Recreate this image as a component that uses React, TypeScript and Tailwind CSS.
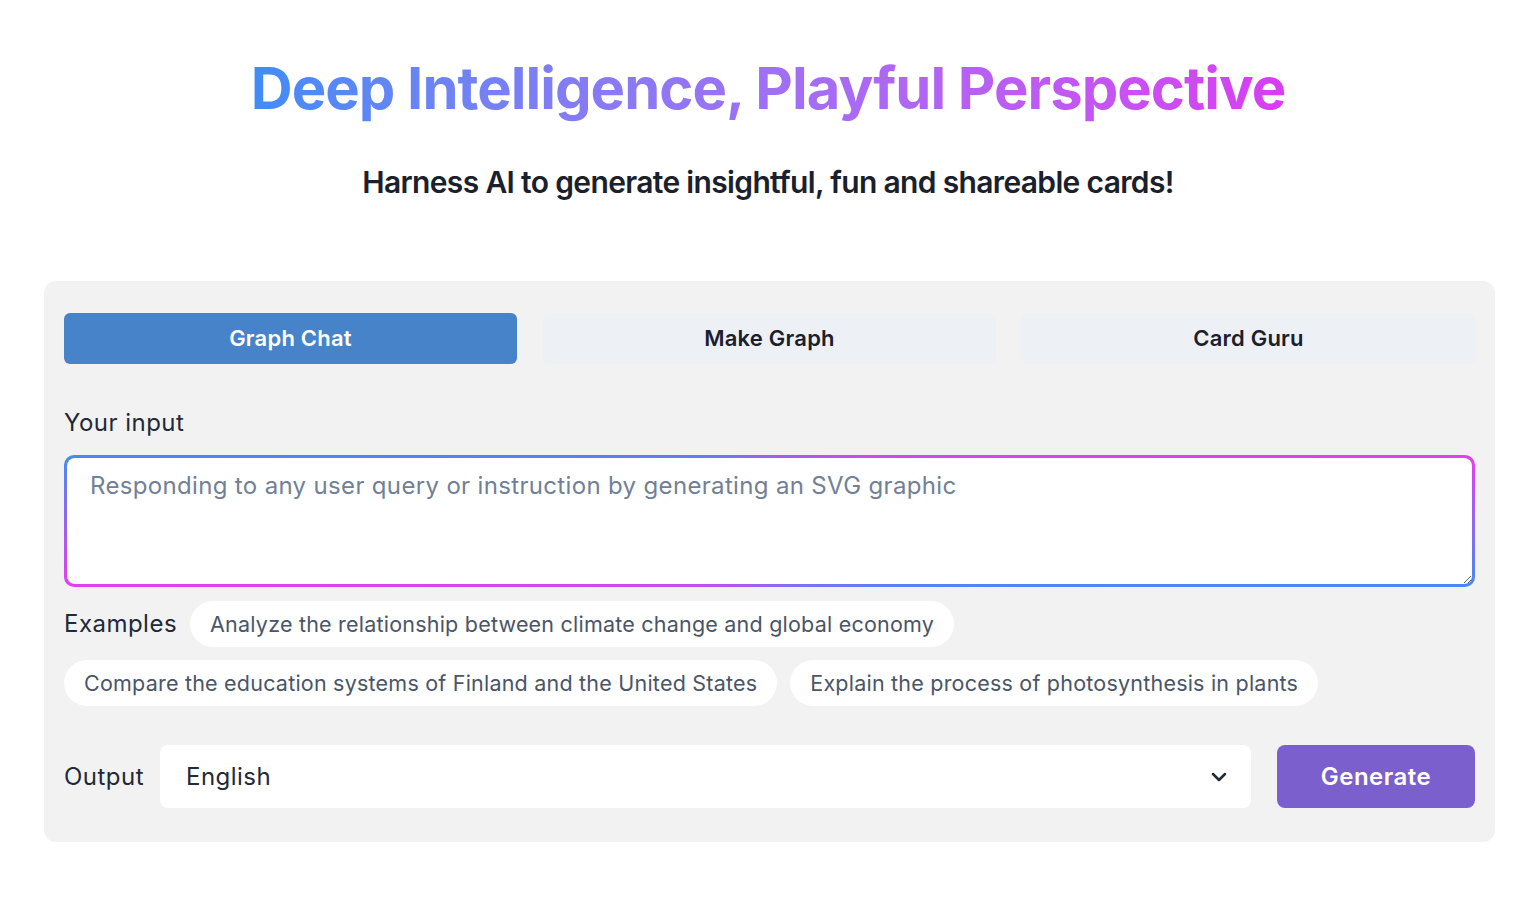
import { useState } from 'react';
import { ChevronDown } from 'lucide-react';

const TABS = ['Graph Chat', 'Make Graph', 'Card Guru'];

const EXAMPLES = [
  'Analyze the relationship between climate change and global economy',
  'Compare the education systems of Finland and the United States',
  'Explain the process of photosynthesis in plants',
];

export default function App() {
  const [tab, setTab] = useState(0);
  const [input, setInput] = useState('');

  return (
    <div className="min-h-screen bg-white font-['Inter',sans-serif] text-[#1f2937]">
      <header className="flex flex-col items-center pt-[52px]">
        <h1 className="bg-gradient-to-r from-[#3f8cf6] to-[#d83cf2] bg-clip-text pb-2 text-[58px] font-bold leading-[72px] tracking-[-0.017em] text-transparent">
          Deep Intelligence, Playful Perspective
        </h1>
        <p className="mt-[30px] text-[30px] font-semibold leading-10 tracking-[-0.022em] text-[#1a202c]">
          Harness AI to generate insightful, fun and shareable cards!
        </p>
      </header>

      <main className="ml-[44px] mr-[41px] mt-[79px] rounded-xl bg-[#f2f2f2] px-5 pb-[34px] pt-8">
        <div className="grid grid-cols-3 gap-[26px]">
          {TABS.map((t, i) => (
            <button
              key={t}
              onClick={() => setTab(i)}
              className={
                i === tab
                  ? 'h-[51px] rounded-md bg-[#4783c9] text-[22px] font-semibold tracking-[0.01em] text-white'
                  : 'h-[51px] rounded-md bg-[#edf1f5] text-[22px] font-semibold tracking-[0.01em] text-[#1a202c]'
              }
            >
              {t}
            </button>
          ))}
        </div>

        <label className="mt-[43px] block text-[24px] leading-8 tracking-[0.02em]">Your input</label>
        <div className="mt-4 rounded-[10px] bg-[conic-gradient(from_275deg,#4a88f5_0deg,#e040f0_170deg,#4a88f5_180deg,#e040f0_350deg,#4a88f5_360deg)] p-[3px]">
          <textarea
            value={input}
            onChange={(e) => setInput(e.target.value)}
            placeholder="Responding to any user query or instruction by generating an SVG graphic"
            className="block h-[126px] w-full rounded-[8px] bg-white px-[23px] py-[12px] text-[24px] leading-8 tracking-[0.014em] outline-none placeholder:text-[#718096]"
          />
        </div>

        <div className="mt-[14px] flex flex-wrap items-center gap-[13px]">
          <span className="text-[24px] tracking-[0.02em]">Examples</span>
          {EXAMPLES.map((ex) => (
            <button
              key={ex}
              onClick={() => setInput(ex)}
              className="h-[46px] rounded-full bg-white px-5 text-[21.5px] tracking-[0.01em] text-[#4a5568]"
            >
              {ex}
            </button>
          ))}
        </div>

        <div className="mt-[39px] flex items-center gap-[26px]">
          <span className="text-[24px] tracking-[0.02em]">Output</span>
          <div className="relative -ml-[10px] flex-1">
            <select className="h-[63px] w-full appearance-none rounded-lg bg-white px-[26px] text-[24px] tracking-[0.02em] outline-none">
              <option>English</option>
              <option>中文</option>
              <option>日本語</option>
            </select>
            <ChevronDown className="pointer-events-none absolute right-[20px] top-1/2 h-6 w-6 -translate-y-1/2" strokeWidth={2.5} />
          </div>
          <button className="h-[63px] w-[198px] rounded-lg bg-[#7b5fcc] text-[24px] font-semibold tracking-[0.02em] text-white">
            Generate
          </button>
        </div>
      </main>
    </div>
  );
}
